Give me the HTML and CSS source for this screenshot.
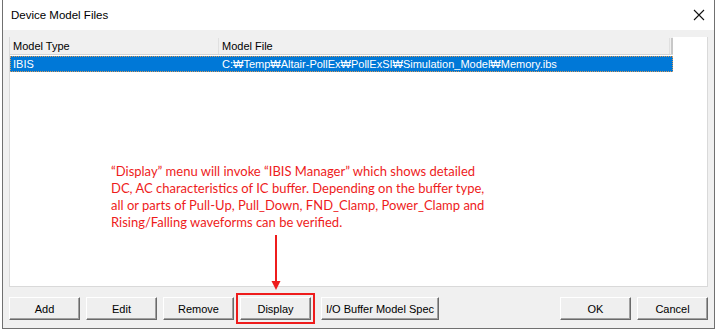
FILE: index.html
```html
<html>
    <head>
        <link rel="stylesheet" href="styles.css">
    </head>
    <body>
        <div class="window">
            <div class="titlebar">
                <span class="title">Device Model Files</span>
                <span class="close">
                    <svg width="12" height="12" viewBox="0 0 12 12">
                        <path d="M1 1 L11 11 M11 1 L1 11" stroke="#111" stroke-width="1.1" fill="none"/>
                    </svg>
                </span>
            </div>
            <div class="client">
                <div class="listview">
                    <div class="lv-header">
                        <div class="col col-type">Model Type</div>
                        <div class="col col-file">Model File</div>
                        <div class="grip"></div>
                    </div>
                    <div class="lv-row selected">
                        <div class="col col-type">IBIS</div>
                        <div class="col col-file">C:&#8361;Temp&#8361;Altair-PollEx&#8361;PollExSI&#8361;Simulation_Model&#8361;Memory.ibs</div>
                    </div>

                    <!-- annotation drawn over the list -->
                    <div class="note">
                        “Display” menu will invoke “IBIS Manager” which shows detailed<br>
                        DC, AC characteristics of IC buffer. Depending on the buffer type,<br>
                        all or parts of Pull-Up, Pull_Down, FND_Clamp, Power_Clamp and<br>
                        Rising/Falling waveforms can be verified.
                    </div>
                    <svg class="arrow" width="12" height="56" viewBox="0 0 12 56">
                        <line x1="6" y1="0" x2="6" y2="48" stroke="#ee1c1c" stroke-width="2"/>
                        <path d="M1.5 46 L10.5 46 L6 55 Z" fill="#ee1c1c"/>
                    </svg>
                </div>
                <div class="buttons">
                    <button class="btn">Add</button>
                    <button class="btn">Edit</button>
                    <button class="btn">Remove</button>
                    <button class="btn highlight">Display</button>
                    <button class="btn wide">I/O Buffer Model Spec</button>
                    <div class="spacer"></div>
                    <button class="btn">OK</button>
                    <button class="btn">Cancel</button>
                </div>
            </div>
        </div>
    </body>
</html>
```

FILE: styles.css
```css
body {
    margin: 0;
    background: #ffffff;
    font-family: "Liberation Sans", Arial, sans-serif;
}

.window {
    margin-left: 2px;
    width: 711px;
    height: 328px;
    border: 1px solid #707070;
    border-top: none;
    background: #f0f0f0;
    display: flex;
    flex-direction: column;
}

.titlebar {
    height: 30px;
    background: #ffffff;
    display: flex;
    align-items: center;
    padding-left: 8px;
    padding-right: 9px;
}

.title {
    font-size: 11.5px;
    color: #000;
    flex: 1;
}

.close {
    display: flex;
}

.client {
    flex: 1;
    padding: 7px 6px 0 6px;
}

.listview {
    position: relative;
    height: 249px;
    background: #ffffff;
    border: 1px solid #d9d9d9;
    border-top: none;
    font-size: 11px;
}

.lv-header {
    display: flex;
    height: 16px;
    width: 663px;
    background: #f0f0f0;
    border-bottom: 1px solid #d5d5d5;
    border-top: 1px solid #f0f0f0;
}

.lv-header .col {
    border-right: 1px solid #e0e0e0;
    line-height: 16px;
}

.grip {
    flex: 1;
    border-right: 2px solid #c8c8c8;
}

.col {
    padding-left: 3px;
    white-space: nowrap;
    overflow: hidden;
}

.col-type {
    width: 205px;
}

.col-file {
    width: 447px;
}

.lv-row {
    display: flex;
    height: 16px;
    width: 663px;
    line-height: 16px;
    margin-top: 1px;
}

.lv-row.selected {
    background: #0078d7;
    color: #ffffff;
    outline: 1px dotted #d79a5a;
    outline-offset: -1px;
}

.lv-row .col-type {
    width: 206px;
}

.note {
    position: absolute;
    left: 101px;
    top: 126px;
    color: #ee1c1c;
    font-family: Lato, "Liberation Sans", sans-serif;
    font-size: 13px;
    line-height: 17px;
    white-space: nowrap;
}

.arrow {
    position: absolute;
    left: 260px;
    top: 198px;
    overflow: visible;
}

.buttons {
    display: flex;
    gap: 6px;
    margin-top: 10px;
}

.btn {
    width: 71px;
    height: 23px;
    padding: 0;
    font-family: "Liberation Sans", Arial, sans-serif;
    font-size: 11px;
    color: #000;
    background: #efefef;
    border: 1px solid;
    border-color: #ffffff #6a6a6a #6a6a6a #ffffff;
    box-shadow: inset -1px -1px 0 #a0a0a0;
}

.btn.wide {
    width: 118px;
    margin-left: 4px;
}

.highlight {
    outline: 2px solid #ee1c1c;
    outline-offset: 2px;
}

.spacer {
    flex: 1;
}
```
